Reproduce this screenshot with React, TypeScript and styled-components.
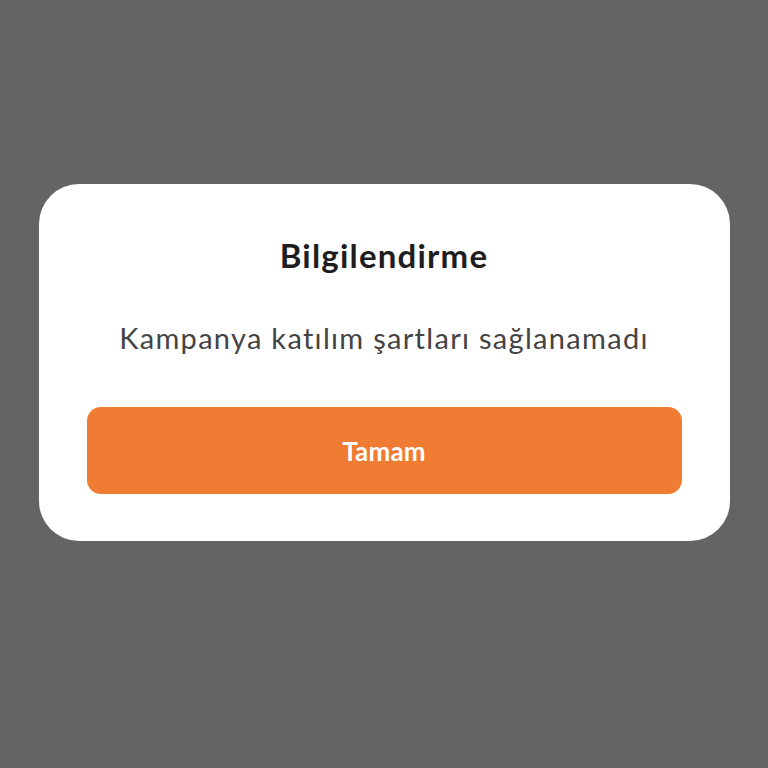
import React from 'react';
import styled, { createGlobalStyle } from 'styled-components';

const GlobalStyle = createGlobalStyle`
    html, body {
        margin: 0;
        padding: 0;
        background: #646464;
        font-family: Lato, "Noto Sans", sans-serif;
    }
`;

const Overlay = styled.div`
    height: 768px;
    box-sizing: border-box;
    padding-bottom: 43px;
    display: flex;
    align-items: center;
    justify-content: center;
`;

const DialogCard = styled.div`
    width: 691px;
    box-sizing: border-box;
    background: #ffffff;
    border-radius: 40px;
    padding: 51px 48px 47px;
    display: flex;
    flex-direction: column;
    align-items: center;
`;

const Title = styled.h2`
    margin: 0;
    font-size: 33px;
    line-height: 40px;
    letter-spacing: 1.2px;
    font-weight: 700;
    color: #1e1e1e;
`;

const Message = styled.p`
    margin: 43px 0 0;
    font-size: 29px;
    line-height: 40px;
    letter-spacing: 1.3px;
    font-weight: 400;
    color: #444444;
`;

const ConfirmButton = styled.button`
    margin-top: 49px;
    width: 100%;
    height: 87px;
    border: none;
    border-radius: 14px;
    background: #f07b33;
    color: #ffffff;
    font-family: inherit;
    font-size: 26px;
    letter-spacing: 0.2px;
    font-weight: 700;
    cursor: pointer;
`;

const App = () => {
    return (
        <>
            <GlobalStyle />
            <Overlay>
                <DialogCard>
                    <Title>Bilgilendirme</Title>
                    <Message>Kampanya katılım şartları sağlanamadı</Message>
                    <ConfirmButton>Tamam</ConfirmButton>
                </DialogCard>
            </Overlay>
        </>
    );
};

export default App;
